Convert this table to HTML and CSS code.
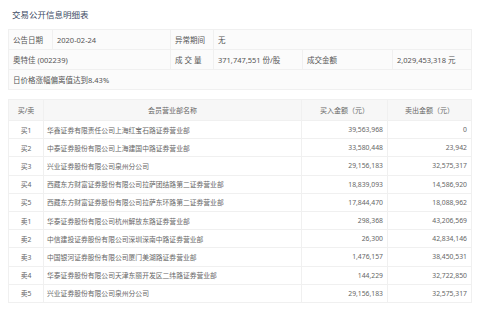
FILE: index.html
```html
<!DOCTYPE html>
<html lang="zh-CN">
<head>
  <meta charset="UTF-8" />
  <title>交易公开信息明细表</title>
  <link rel="stylesheet" href="styles.css">
</head>
<body>

  <!-- ==== 概要 ==== -->
  <h1 class="title">交易公开信息明细表</h1>

  <table class="info">
    <colgroup>
      <col class="c-label"><col class="c-date"><col class="c-label2">
      <col class="c-vol"><col class="c-label3"><col>
    </colgroup>
    <tr>
      <td>公告日期</td>
      <td>2020-02-24</td>
      <td>异常期间</td>
      <td colspan="3">无</td>
    </tr>
    <tr>
      <td colspan="2">奥特佳 (002239)</td>
      <td class="spaced">成交量</td>
      <td>371,747,551 份/股</td>
      <td>成交金额</td>
      <td>2,029,453,318 元</td>
    </tr>
    <tr>
      <td colspan="6">日价格涨幅偏离值达到8.43%</td>
    </tr>
  </table>

  <!-- ==== 营业部明细 ==== -->
  <table class="detail">
    <colgroup>
      <col class="c-side"><col class="c-name"><col class="c-buy"><col>
    </colgroup>
    <thead>
      <tr>
        <th>买/卖</th>
        <th>会员营业部名称</th>
        <th>买入金额（元）</th>
        <th>卖出金额（元）</th>
      </tr>
    </thead>
    <tbody>
      <tr><td class="side">买1</td><td>华鑫证券有限责任公司上海红宝石路证券营业部</td><td class="num">39,563,968</td><td class="num">0</td></tr>
      <tr><td class="side">买2</td><td>中泰证券股份有限公司上海建国中路证券营业部</td><td class="num">33,580,448</td><td class="num">23,942</td></tr>
      <tr><td class="side">买3</td><td>兴业证券股份有限公司泉州分公司</td><td class="num">29,156,183</td><td class="num">32,575,317</td></tr>
      <tr><td class="side">买4</td><td>西藏东方财富证券股份有限公司拉萨团结路第二证券营业部</td><td class="num">18,839,093</td><td class="num">14,586,920</td></tr>
      <tr><td class="side">买5</td><td>西藏东方财富证券股份有限公司拉萨东环路第二证券营业部</td><td class="num">17,844,470</td><td class="num">18,088,962</td></tr>
      <tr><td class="side">卖1</td><td>华泰证券股份有限公司杭州解放东路证券营业部</td><td class="num">298,368</td><td class="num">43,206,569</td></tr>
      <tr><td class="side">卖2</td><td>中信建投证券股份有限公司深圳深南中路证券营业部</td><td class="num">26,300</td><td class="num">42,834,146</td></tr>
      <tr><td class="side">卖3</td><td>中国银河证券股份有限公司厦门美湖路证券营业部</td><td class="num">1,476,157</td><td class="num">38,450,531</td></tr>
      <tr><td class="side">卖4</td><td>华泰证券股份有限公司天津东丽开发区二纬路证券营业部</td><td class="num">144,229</td><td class="num">32,722,850</td></tr>
      <tr><td class="side">卖5</td><td>兴业证券股份有限公司泉州分公司</td><td class="num">29,156,183</td><td class="num">32,575,317</td></tr>
    </tbody>
  </table>

</body>
</html>
```

FILE: styles.css
```css
:root {
  --clr-bg: #fff;
  --clr-cell: #fbfbfb;
  --clr-head: #f7f7f7;
  --clr-border: #f0f0f0;
  --clr-text: #666;
  --clr-title: #3d4a63;
}

* { box-sizing: border-box; margin: 0; padding: 0; }
body {
  font-family: "Noto Sans", "Noto Sans CJK SC", sans-serif;
  background: var(--clr-bg);
  color: var(--clr-text);
  padding: 8px;
}

.title {
  font-size: 8.5px;
  font-weight: 400;
  line-height: 14px;
  color: var(--clr-title);
  padding-left: 4px;
  margin-bottom: 7px;
}

table {
  width: 464px;
  border-collapse: collapse;
  table-layout: fixed;
}
td, th {
  border: 1px solid var(--clr-border);
  white-space: nowrap;
  overflow: hidden;
}

/* 概要表 */
.c-label { width: 44px; }
.c-date { width: 118px; }
.c-label2 { width: 43px; }
.c-vol { width: 89px; }
.c-label3 { width: 90px; }

.info { margin-bottom: 9px; background: var(--clr-cell); }
.info td {
  height: 20px;
  font-size: 7.5px;
  padding: 0 4px;
  color: #555;
}
.info .spaced { letter-spacing: 2px; }

/* 明细表 */
.c-side { width: 35px; }
.c-name { width: 258px; }
.c-buy { width: 86px; }

.detail th {
  height: 21px;
  font-size: 7px;
  font-weight: 400;
  background: var(--clr-head);
  color: #666;
}
.detail td {
  height: 18.2px;
  font-size: 6.8px;
  padding: 0 3px;
}
.detail .side { text-align: center; }
.detail .num { text-align: right; padding-right: 4px; }
```
